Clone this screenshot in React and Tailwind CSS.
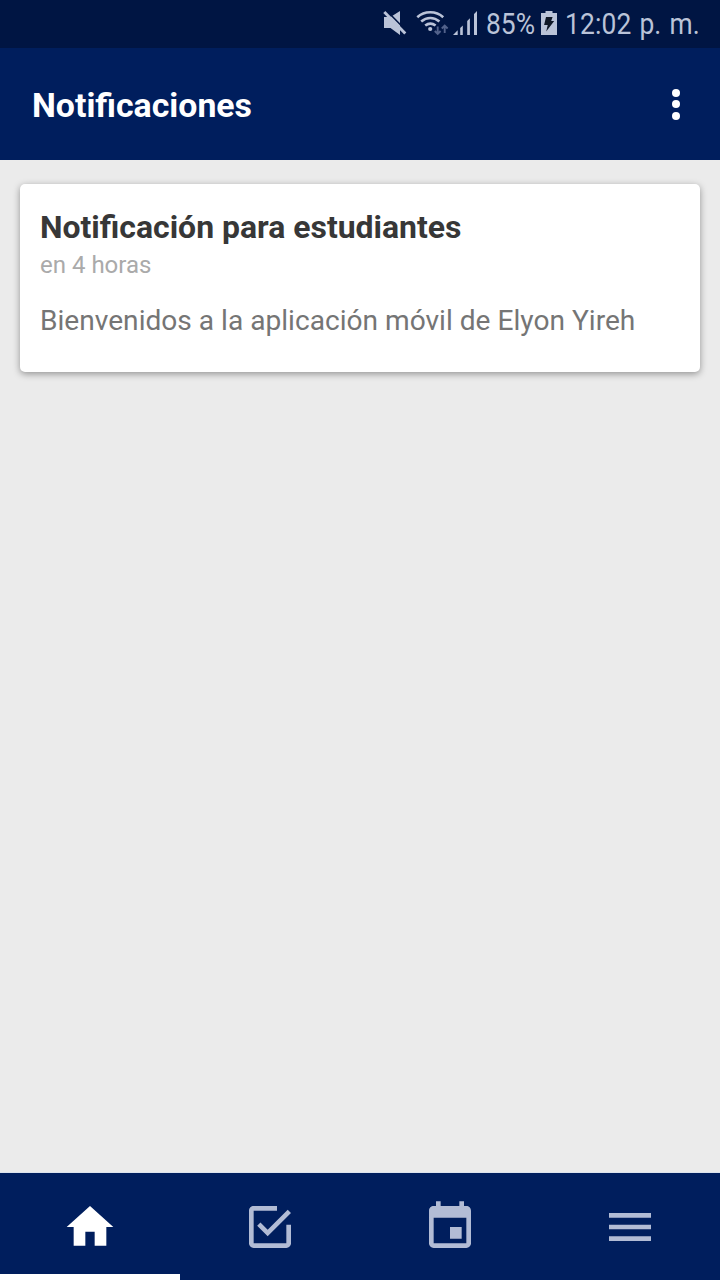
const tabs = [
  { label: 'Inicio', d: 'M10 20v-6h4v6h5v-8h3L12 3 2 12h3v8z' },
  {
    label: 'Tareas',
    d: 'M19 19H5V5h10V3H5c-1.1 0-2 .9-2 2v14c0 1.1.9 2 2 2h14c1.1 0 2-.9 2-2v-8h-2v8zM7.91 10.08L6.5 11.5 11 16 21 6 19.59 4.58 11 13.17z',
  },
  {
    label: 'Calendario',
    d: 'M17 12h-5v5h5v-5zM16 1v2H8V1H6v2H5c-1.11 0-1.99.9-1.99 2L3 19c0 1.1.89 2 2 2h14c1.1 0 2-.9 2-2V5c0-1.1-.9-2-2-2h-1V1h-2zm3 18H5V8h14v11z',
  },
  { label: 'Menú', d: 'M3 18h18v-2H3v2zm0-5h18v-2H3v2zm0-7v2h18V6H3z' },
];

function StatusIcons() {
  return (
    <svg className="h-12 w-[104px] shrink-0" viewBox="376 0 104 48" fill="none" aria-hidden="true">
      <path d="M384 17h6.5L400 11v24l-9.5-7H384z" fill="#bac3d8" />
      <path d="M386.5 10.5L409 33.5" stroke="#001543" strokeWidth="1.6" />
      <path d="M384.3 12L405.3 33.5" stroke="#bac3d8" strokeWidth="2.9" />
      <g stroke="#bac3d8" strokeWidth="2.6">
        <path d="M417.3 17.2C424.5 10.6 436 10.6 443.2 17.2" />
        <path d="M421.2 21.5C426.6 16.8 434 16.8 439.4 21.5" />
        <path d="M425.2 25.6C428.4 23.1 432.4 23.1 435.6 25.6" />
      </g>
      <circle cx="430.2" cy="29" r="2.1" fill="#bac3d8" />
      <g stroke="#52628b" strokeWidth="1.9">
        <path d="M437.7 26.5V34M434.8 31l2.9 3 2.9-3M444.7 33v-7.5M441.8 28.5l2.9-3 2.9 3" />
      </g>
      <g fill="#bac3d8">
        <path d="M453 35l4.7-4.7V35z" />
        <path d="M460.2 35v-7l2.6-2.6V35zM467.2 35V21l2.7-2.7V35zM474 35V14l3-3v24z" />
      </g>
    </svg>
  );
}

function BatteryIcon() {
  return (
    <svg className="ml-[5px] h-12 w-[18px] shrink-0" viewBox="540 0 18 48" aria-hidden="true">
      <path d="M545.5 11h7v2h4.5v22h-16V13h4.5z" fill="#bac3d8" />
      <path d="M546 17h6.6l-1.4 4h3l-8 10.5 1.5-6.5h-3.6z" fill="#101827" />
    </svg>
  );
}

export default function App() {
  return (
    <div className="flex h-[1280px] w-[720px] flex-col overflow-hidden bg-[#ebebeb] font-['Roboto',sans-serif]">
      <div className="flex h-12 shrink-0 items-center bg-[#001543] pl-[376px] text-[30px] leading-[48px] whitespace-nowrap text-[#bac3d8]">
        <StatusIcons />
        <div className="ml-[6px] w-[49px] shrink-0">
          <span className="inline-block origin-left scale-x-[0.88]">85%</span>
        </div>
        <BatteryIcon />
        <div className="ml-[7px] w-[140px] shrink-0">
          <span className="inline-block origin-left scale-x-[0.88] tracking-[0.15px] [word-spacing:1.5px]">
            12:02 p. m.
          </span>
        </div>
      </div>

      <header className="flex h-28 shrink-0 items-center justify-between bg-[#001e5d] pr-8 pl-8 text-white">
        <h1 className="pt-[3px] text-[33.85px] leading-10 font-bold">Notificaciones</h1>
        <button aria-label="Más opciones" className="flex w-6 flex-col items-center gap-[3.5px]">
          <span className="size-2 rounded-full bg-white" />
          <span className="size-2 rounded-full bg-white" />
          <span className="size-2 rounded-full bg-white" />
        </button>
      </header>

      <main className="flex-1 px-5 pt-6">
        <article className="h-[188px] rounded-[5px] bg-white px-5 pt-6 shadow-[0_2px_7px_rgba(0,0,0,0.38)]">
          <h2 className="text-[31.95px] leading-[38px] font-bold text-[#373737]">Notificación para estudiantes</h2>
          <p className="mt-1 text-2xl leading-[30px] text-[#aaaaaa]">en 4 horas</p>
          <p className="mt-[25px] text-[28.12px] leading-8 text-[#757575]">
            Bienvenidos a la aplicación móvil de Elyon Yireh
          </p>
        </article>
      </main>

      <nav className="grid h-[108px] shrink-0 grid-cols-4 border-t border-[#dce3ed] bg-[#001e5d]">
        {tabs.map((tab, i) => (
          <button
            key={tab.label}
            aria-label={tab.label}
            className={
              i === 0
                ? 'flex justify-center border-b-[6px] border-white pt-[26px] text-white'
                : 'flex justify-center pt-[26px] text-[#b2bcd5]'
            }
          >
            <svg className="size-14" viewBox="0 0 24 24" fill="currentColor" aria-hidden="true">
              <path d={tab.d} />
            </svg>
          </button>
        ))}
      </nav>
    </div>
  );
}
